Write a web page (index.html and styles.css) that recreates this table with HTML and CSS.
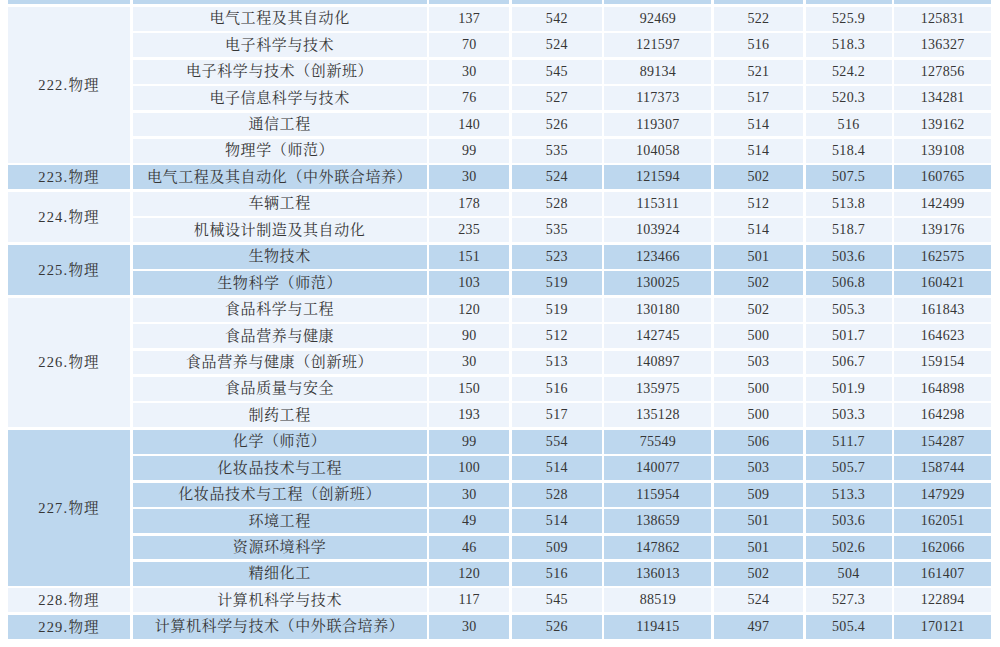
FILE: index.html
```html
<!DOCTYPE html>
<html lang="zh">
<head>
<meta charset="utf-8">
<title>录取分数</title>
<link rel="stylesheet" href="styles.css">
</head>
<body>
<div class="sheet">
  <div class="c d"></div><div class="c d"></div><div class="c d"></div><div class="c d"></div><div class="c d"></div><div class="c d"></div><div class="c d"></div><div class="c d"></div>

  <div class="c g l s6">222.物理</div>
  <div class="c m l">电气工程及其自动化</div><div class="c n l">137</div><div class="c n l">542</div><div class="c n l">92469</div><div class="c n l">522</div><div class="c n l">525.9</div><div class="c n l">125831</div>
  <div class="c m l">电子科学与技术</div><div class="c n l">70</div><div class="c n l">524</div><div class="c n l">121597</div><div class="c n l">516</div><div class="c n l">518.3</div><div class="c n l">136327</div>
  <div class="c m l">电子科学与技术（创新班）</div><div class="c n l">30</div><div class="c n l">545</div><div class="c n l">89134</div><div class="c n l">521</div><div class="c n l">524.2</div><div class="c n l">127856</div>
  <div class="c m l">电子信息科学与技术</div><div class="c n l">76</div><div class="c n l">527</div><div class="c n l">117373</div><div class="c n l">517</div><div class="c n l">520.3</div><div class="c n l">134281</div>
  <div class="c m l">通信工程</div><div class="c n l">140</div><div class="c n l">526</div><div class="c n l">119307</div><div class="c n l">514</div><div class="c n l">516</div><div class="c n l">139162</div>
  <div class="c m l">物理学（师范）</div><div class="c n l">99</div><div class="c n l">535</div><div class="c n l">104058</div><div class="c n l">514</div><div class="c n l">518.4</div><div class="c n l">139108</div>

  <div class="c g d">223.物理</div>
  <div class="c m d">电气工程及其自动化（中外联合培养）</div><div class="c n d">30</div><div class="c n d">524</div><div class="c n d">121594</div><div class="c n d">502</div><div class="c n d">507.5</div><div class="c n d">160765</div>

  <div class="c g l s2">224.物理</div>
  <div class="c m l">车辆工程</div><div class="c n l">178</div><div class="c n l">528</div><div class="c n l">115311</div><div class="c n l">512</div><div class="c n l">513.8</div><div class="c n l">142499</div>
  <div class="c m l">机械设计制造及其自动化</div><div class="c n l">235</div><div class="c n l">535</div><div class="c n l">103924</div><div class="c n l">514</div><div class="c n l">518.7</div><div class="c n l">139176</div>

  <div class="c g d s2">225.物理</div>
  <div class="c m d">生物技术</div><div class="c n d">151</div><div class="c n d">523</div><div class="c n d">123466</div><div class="c n d">501</div><div class="c n d">503.6</div><div class="c n d">162575</div>
  <div class="c m d">生物科学（师范）</div><div class="c n d">103</div><div class="c n d">519</div><div class="c n d">130025</div><div class="c n d">502</div><div class="c n d">506.8</div><div class="c n d">160421</div>

  <div class="c g l s5">226.物理</div>
  <div class="c m l">食品科学与工程</div><div class="c n l">120</div><div class="c n l">519</div><div class="c n l">130180</div><div class="c n l">502</div><div class="c n l">505.3</div><div class="c n l">161843</div>
  <div class="c m l">食品营养与健康</div><div class="c n l">90</div><div class="c n l">512</div><div class="c n l">142745</div><div class="c n l">500</div><div class="c n l">501.7</div><div class="c n l">164623</div>
  <div class="c m l">食品营养与健康（创新班）</div><div class="c n l">30</div><div class="c n l">513</div><div class="c n l">140897</div><div class="c n l">503</div><div class="c n l">506.7</div><div class="c n l">159154</div>
  <div class="c m l">食品质量与安全</div><div class="c n l">150</div><div class="c n l">516</div><div class="c n l">135975</div><div class="c n l">500</div><div class="c n l">501.9</div><div class="c n l">164898</div>
  <div class="c m l">制药工程</div><div class="c n l">193</div><div class="c n l">517</div><div class="c n l">135128</div><div class="c n l">500</div><div class="c n l">503.3</div><div class="c n l">164298</div>

  <div class="c g d s6">227.物理</div>
  <div class="c m d">化学（师范）</div><div class="c n d">99</div><div class="c n d">554</div><div class="c n d">75549</div><div class="c n d">506</div><div class="c n d">511.7</div><div class="c n d">154287</div>
  <div class="c m d">化妆品技术与工程</div><div class="c n d">100</div><div class="c n d">514</div><div class="c n d">140077</div><div class="c n d">503</div><div class="c n d">505.7</div><div class="c n d">158744</div>
  <div class="c m d">化妆品技术与工程（创新班）</div><div class="c n d">30</div><div class="c n d">528</div><div class="c n d">115954</div><div class="c n d">509</div><div class="c n d">513.3</div><div class="c n d">147929</div>
  <div class="c m d">环境工程</div><div class="c n d">49</div><div class="c n d">514</div><div class="c n d">138659</div><div class="c n d">501</div><div class="c n d">503.6</div><div class="c n d">162051</div>
  <div class="c m d">资源环境科学</div><div class="c n d">46</div><div class="c n d">509</div><div class="c n d">147862</div><div class="c n d">501</div><div class="c n d">502.6</div><div class="c n d">162066</div>
  <div class="c m d">精细化工</div><div class="c n d">120</div><div class="c n d">516</div><div class="c n d">136013</div><div class="c n d">502</div><div class="c n d">504</div><div class="c n d">161407</div>

  <div class="c g l">228.物理</div>
  <div class="c m l">计算机科学与技术</div><div class="c n l">117</div><div class="c n l">545</div><div class="c n l">88519</div><div class="c n l">524</div><div class="c n l">527.3</div><div class="c n l">122894</div>

  <div class="c g d">229.物理</div>
  <div class="c m d">计算机科学与技术（中外联合培养）</div><div class="c n d">30</div><div class="c n d">526</div><div class="c n d">119415</div><div class="c n d">497</div><div class="c n d">505.4</div><div class="c n d">170121</div>
</div>
</body>
</html>
```
FILE: styles.css
```css
html, body {
  margin: 0;
  padding: 0;
  background: #ffffff;
}

body {
  padding-left: 8px;
  overflow: hidden;
}

.sheet {
  display: grid;
  grid-template-columns: 122px 294px 80px 90px 107px 89px 86px 97px;
  grid-auto-rows: 23.9px;
  column-gap: 2.6px;
  row-gap: 2.56px;
  margin-top: -19.6px;
  width: 984px;
  color: #363636;
  font-family: "Liberation Serif", "Noto Serif CJK SC", "Noto Sans CJK SC", serif;
}

.c {
  display: flex;
  align-items: center;
  justify-content: center;
  white-space: nowrap;
  line-height: 1;
}

.l { background: #edf3fb; }
.d { background: #bdd7ee; }

.g {
  font-size: 14.5px;
  letter-spacing: 1.2px;
}

.m {
  font-size: 15px;
  letter-spacing: 0.6px;
}

.n {
  font-size: 14px;
  letter-spacing: 0.3px;
}

.s2 { grid-row: span 2; }
.s5 { grid-row: span 5; }
.s6 { grid-row: span 6; }
```
